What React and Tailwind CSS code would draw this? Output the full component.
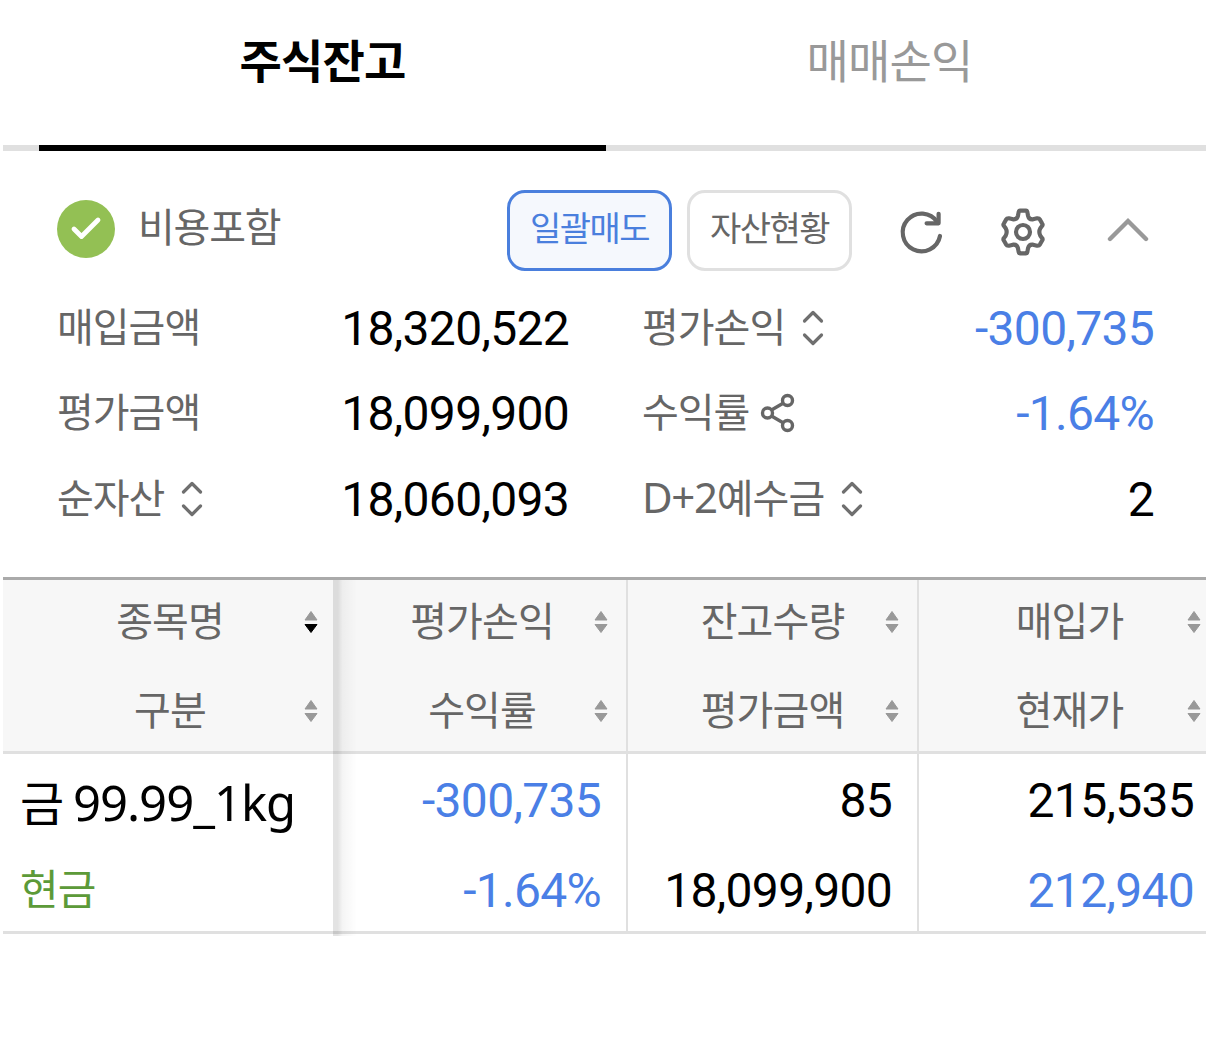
import { Check } from "lucide-react";

/* ================= DATA ================= */

const columns = [
  { top: "종목명", bottom: "구분", active: true, style: "pr-4 pl-[19px]" },
  { top: "평가손익", bottom: "수익률", style: "border-r-2 border-[#e0e0e0] pr-[18px] pl-[22px]" },
  { top: "잔고수량", bottom: "평가금액", style: "border-r-2 border-[#e0e0e0] px-[18px]" },
  { top: "매입가", bottom: "현재가", style: "px-[19px]" }
];

const holding = [
  { top: "-300,735", bottom: "-1.64%", topStyle: "text-[#4a7fe6]", bottomStyle: "text-[#4a7fe6]" },
  { top: "85", bottom: "18,099,900", topStyle: "text-black", bottomStyle: "text-black" },
  { top: "215,535", bottom: "212,940", topStyle: "text-black", bottomStyle: "text-[#4a7fe6]" }
];

/* ================= ICONS ================= */

function UpDown() {
  return (
    <svg width="22" height="36" viewBox="0 0 22 36" fill="none" stroke="#6f6f6f" strokeWidth="3.2" strokeLinecap="round" strokeLinejoin="round">
      <path d="M2.5 11 11 2.5 19.5 11M2.5 25 11 33.5 19.5 25" />
    </svg>
  );
}

function Sort({ active }) {
  return (
    <svg width="14" height="24" viewBox="0 0 14 24" strokeWidth="1" strokeLinejoin="round">
      <path d="M7 1.5 13 10H1z" fill="#999" stroke="#999" />
      <path d="M7 22.5 13 14.5H1z" fill={active ? "#000" : "#999"} stroke={active ? "#000" : "#999"} />
    </svg>
  );
}

function Refresh() {
  return (
    <svg width="48" height="48" viewBox="0 0 48 48" fill="none" stroke="#666" strokeWidth="4.2" strokeLinecap="round" strokeLinejoin="round">
      <path d="M42 28A18.8 18.8 0 1 1 39.3 14.2" />
      <path d="M40.6 5.8V15.3H28.6" />
    </svg>
  );
}

function Gear() {
  return (
    <svg width="48" height="48" viewBox="0 0 144 144" fill="none" stroke="#666" strokeWidth="12.5" strokeLinejoin="round">
      <path d="M63 8H81Q84 8 85 12L87 23C89 31 94 35 102 34L114 31Q120 30 123 35L129 46Q133 51 129 54L124 61Q118 72 124 83L129 90Q133 93 129 98L123 109Q120 114 114 113L102 110C94 109 89 113 87 121L85 132Q84 136 81 136H63Q60 136 59 132L57 121C55 113 50 109 42 110L30 113Q24 114 21 109L15 98Q11 93 15 90L20 83Q26 72 20 61L15 54Q11 51 15 46L21 35Q24 30 30 31L42 34C50 35 55 31 57 23L59 12Q60 8 63 8Z" />
      <circle cx="72" cy="72" r="21" />
    </svg>
  );
}

function Collapse() {
  return (
    <svg width="42" height="26" viewBox="0 0 42 26" fill="none" stroke="#999" strokeWidth="4.4" strokeLinecap="round">
      <path d="M3 22 21 4 39 22" />
    </svg>
  );
}

function Share() {
  return (
    <svg width="36" height="40" viewBox="0 0 36 40" fill="none" stroke="#666" strokeWidth="3.4">
      <circle cx="7.5" cy="20" r="5" />
      <circle cx="27.5" cy="7.5" r="5" />
      <circle cx="27.5" cy="32.5" r="5" />
      <path d="M11.5 17 23.5 10M11.5 23 23.5 30" />
    </svg>
  );
}

/* ================= CELLS ================= */

function Label({ text, children }) {
  return (
    <div className="flex items-center text-[40px] leading-[60px] tracking-[-1px] text-[#666]">
      <span className="-mt-1.5 whitespace-nowrap">{text}</span>
      {children}
    </div>
  );
}

function Amount({ value, style = "text-black" }) {
  return (
    <div className={`pt-px text-right font-[Roboto] text-[48px] leading-[60px] tracking-[-0.7px] ${style}`}>
      {value}
    </div>
  );
}

function HeadLine({ text, active }) {
  return (
    <div className="grid h-[89px] grid-cols-[1fr_auto_1fr] items-center text-[40px] leading-[60px] tracking-[-0.9px] text-[#666]">
      <span className="col-start-2 -mt-1.5">{text}</span>
      <span className="justify-self-end"><Sort active={active} /></span>
    </div>
  );
}

/* ================= PAGE ================= */

export default function App() {
  return (
    <div className="h-[1062px] w-[1206px] overflow-hidden bg-white pl-[3px] font-['Noto_Sans_CJK_KR',sans-serif]">

      {/* TABS */}

      <div className="flex h-[151px] border-b-[6px] border-[#e0e0e0] pl-9 text-[46px] leading-[60px] tracking-[-0.8px]">
        <div className="-mb-[6px] w-[567px] border-b-[6px] border-black pt-[28px] text-center font-bold text-black">
          주식잔고
        </div>
        <div className="w-[567px] pt-[28px] text-center text-[#999]">
          매매손익
        </div>
      </div>

      {/* TOOLBAR */}

      <div className="flex h-[135px] items-center pt-6 pr-[57px] pl-[54px]">
        <div className="-mt-1 flex size-[58px] items-center justify-center rounded-full bg-[#93c054] text-white">
          <Check size={36} strokeWidth={3.2} />
        </div>
        <span className="-mt-3 ml-[23px] text-[40px] leading-[60px] tracking-[-1.2px] text-[#666]">비용포함</span>

        <button className="ml-auto h-[81px] w-[165px] rounded-[18px] border-3 border-[#4a7fdd] bg-[#f5f8fd] pb-2 text-[34px] leading-[60px] tracking-[-1.5px] text-[#4a7fdd]">
          일괄매도
        </button>
        <button className="ml-[15px] h-[81px] w-[165px] rounded-[18px] border-3 border-[#e0e0e0] pb-2 text-[34px] leading-[60px] tracking-[-1.5px] text-[#666]">
          자산현황
        </button>

        <div className="ml-[46px] flex items-center pt-0.5">
          <Refresh />
          <div className="ml-[53px]"><Gear /></div>
          <div className="-mt-1 ml-[60px]"><Collapse /></div>
        </div>
      </div>

      {/* SUMMARY */}

      <div className="grid h-[291px] grid-cols-[512px_585px] grid-rows-[60px_60px_62px] content-start gap-y-[25px] pl-[54px] pt-[12px]">
        <div className="flex justify-between">
          <Label text="매입금액" />
          <Amount value="18,320,522" />
        </div>
        <div className="flex justify-between pl-[73px]">
          <Label text="평가손익"><span className="ml-[17px]"><UpDown /></span></Label>
          <Amount value="-300,735" style="text-[#4a7fe6]" />
        </div>
        <div className="flex justify-between">
          <Label text="평가금액" />
          <Amount value="18,099,900" />
        </div>
        <div className="flex justify-between pl-[73px]">
          <Label text="수익률"><span className="ml-[11px]"><Share /></span></Label>
          <Amount value="-1.64%" style="text-[#4a7fe6]" />
        </div>
        <div className="flex justify-between">
          <Label text="순자산"><span className="ml-[17px]"><UpDown /></span></Label>
          <div className="pt-px"><Amount value="18,060,093" /></div>
        </div>
        <div className="flex justify-between pl-[73px]">
          <Label text={<><span className="font-['Noto_Sans'] text-[42px] tracking-[-1.3px]">D+2</span>예수금</>}>
            <span className="ml-[17px]"><UpDown /></span>
          </Label>
          <div className="pt-px"><Amount value="2" /></div>
        </div>
      </div>

      {/* TABLE */}

      <div className="relative w-[1217px] border-t-3 border-[#aaa]">
        <div className="grid h-[174px] grid-cols-[331px_294px_291px_301px] border-b-3 border-[#e0e0e0] bg-[#f7f7f7]">
          {columns.map((col) => (
            <div key={col.top} className={col.style}>
              <div className="-mt-[3px]">
                <HeadLine text={col.top} active={col.active} />
                <HeadLine text={col.bottom} />
              </div>
            </div>
          ))}
        </div>

        <div className="grid h-[180px] grid-cols-[331px_294px_291px_301px] border-b-3 border-[#e0e0e0]">
          <div className="pl-[17px]">
            <div className="h-[90px] pt-4 text-[48px] leading-[60px] whitespace-nowrap text-black">
              금<span className="font-['Noto_Sans'] text-[49px] tracking-[-1px] [word-spacing:-3px]"> 99.99_1kg</span>
            </div>
            <div className="h-[90px] pt-[13px] text-[42px] leading-[60px] tracking-[-0.8px] text-[#5c9a38]">
              현금
            </div>
          </div>
          {holding.map((cell, i) => (
            <div key={cell.top} className={i === 2 ? "pr-[26px]" : "border-r-2 border-[#e0e0e0] pr-[25px]"}>
              <div className="h-[90px] pt-4"><Amount value={cell.top} style={cell.topStyle} /></div>
              <div className="h-[90px] pt-4"><Amount value={cell.bottom} style={cell.bottomStyle} /></div>
            </div>
          ))}
        </div>

        {/* shadow of the pinned column */}
        <div className="absolute top-0 -bottom-[2px] left-[330px] w-6 bg-linear-to-r from-black/11 from-20% via-black/4 via-40% to-transparent" />
      </div>

    </div>
  );
}
